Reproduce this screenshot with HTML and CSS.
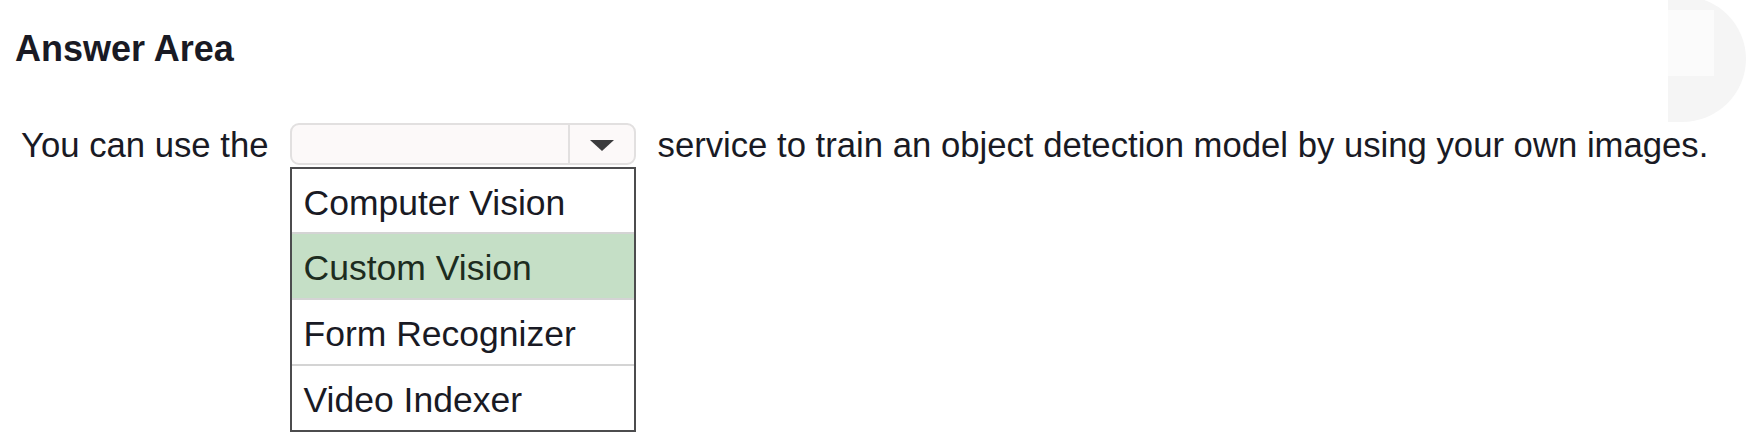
FILE: index.html
```html
<!DOCTYPE html>
<html lang="en">
<head>
<meta charset="utf-8">
<title>Answer Area</title>
<link rel="stylesheet" href="styles.css">
</head>
<body>
<div class="page">
  <h2 class="heading">Answer Area</h2>
  <div class="sentence">
    <span class="text">You can use the</span>
    <div class="dropdown">
      <div class="select">
        <div class="select-value"></div>
        <div class="select-arrow"><span class="triangle"></span></div>
      </div>
      <ul class="options">
        <li class="option">Computer Vision</li>
        <li class="option selected">Custom Vision</li>
        <li class="option">Form Recognizer</li>
        <li class="option">Video Indexer</li>
      </ul>
    </div>
    <span class="text">service to train an object detection model by using your own images.</span>
  </div>
  <div class="corner-mark"><span class="corner-inner"></span></div>
</div>
</body>
</html>
```

FILE: styles.css
```css
html, body {
  margin: 0;
  padding: 0;
  background: #ffffff;
}

body {
  width: 1754px;
  height: 442px;
  overflow: hidden;
  font-family: "Liberation Sans", Arial, sans-serif;
  color: #191a24;
}

.page {
  position: relative;
  width: 1754px;
  height: 442px;
  padding-top: 29px;
  box-sizing: border-box;
}

.heading {
  margin: 0 0 0 15px;
  font-size: 36px;
  font-weight: bold;
  line-height: 40px;
}

.sentence {
  display: flex;
  align-items: flex-start;
  margin-top: 54px;
  padding-left: 21px;
}

.text {
  font-size: 34.7px;
  line-height: 44px;
  white-space: nowrap;
}

.dropdown {
  position: relative;
  width: 346px;
  height: 42px;
  margin: 0 22px 0 21px;
}

.select {
  display: flex;
  height: 42px;
  box-sizing: border-box;
  border: 2px solid #e2e0e0;
  border-radius: 9px;
  background: #fcf9f9;
}

.select-value {
  flex: 1;
}

.select-arrow {
  width: 64px;
  border-left: 2px solid #e2e0e0;
  display: flex;
  align-items: center;
  justify-content: center;
}

.triangle {
  width: 0;
  height: 0;
  border-left: 12px solid transparent;
  border-right: 12px solid transparent;
  border-top: 11px solid #3b3b3d;
  margin-top: 2px;
}

.options {
  position: absolute;
  left: 0;
  top: 44px;
  width: 346px;
  margin: 0;
  padding: 0;
  list-style: none;
  box-sizing: border-box;
  border: 2px solid #4c4c4e;
  background: #ffffff;
}

.option {
  height: 64px;
  line-height: 64px;
  padding: 2px 0 0 12px;
  box-sizing: border-box;
  font-size: 35.5px;
  border-top: 2px solid #d4d4d4;
  color: #191a24;
}

.option:first-child {
  border-top: none;
  height: 63px;
}

.option + .option {
  height: 66px;
}

.option.selected {
  background: #c5dfc6;
  color: #1d2c20;
}

.corner-mark {
  position: absolute;
  left: 1668px;
  top: -4px;
  width: 78px;
  height: 126px;
  background: #f5f5f5;
  border-radius: 0 64px 64px 0 / 0 63px 63px 0;
}

.corner-inner {
  position: absolute;
  left: 0;
  top: 14px;
  width: 46px;
  height: 66px;
  background: #fbfbfb;
}
```
